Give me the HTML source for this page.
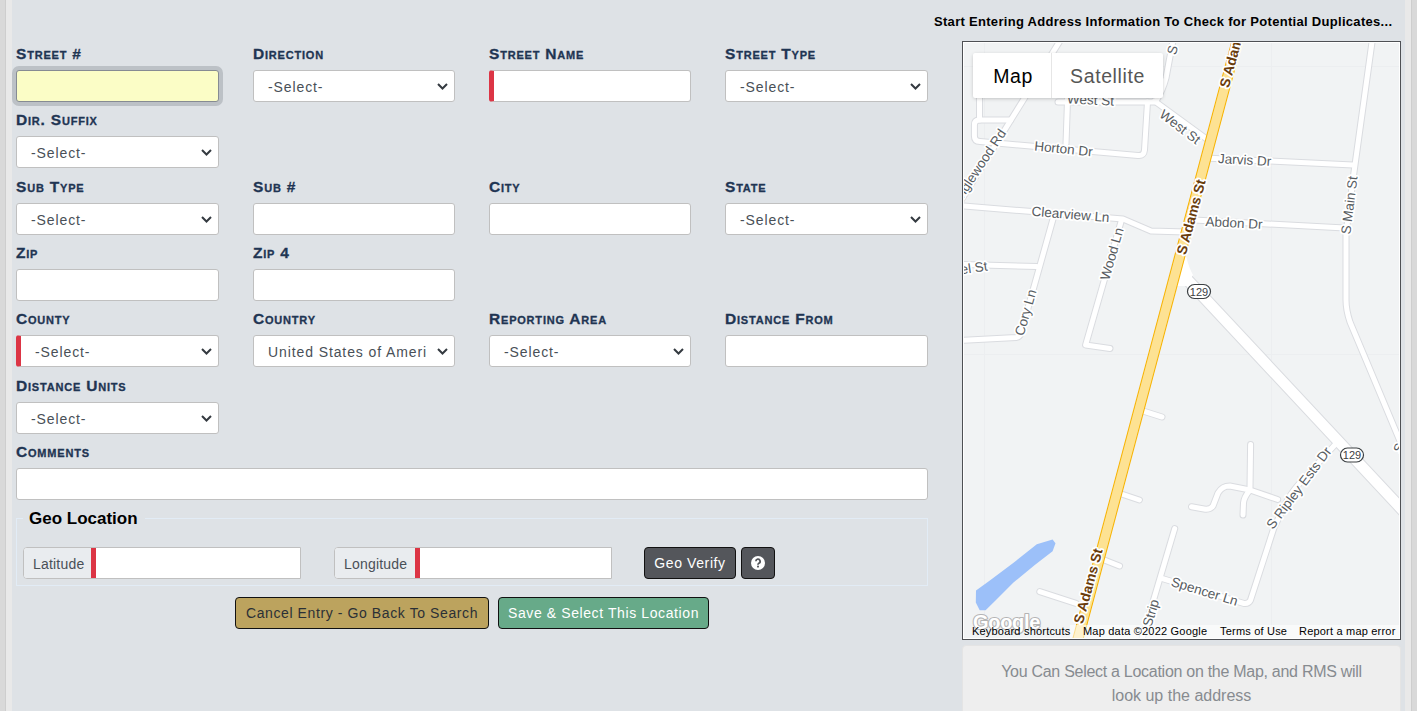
<!DOCTYPE html>
<html><head><meta charset="utf-8">
<style>
*{box-sizing:border-box;margin:0;padding:0}
html,body{width:1417px;height:711px;overflow:hidden}
body{background:#dee2e6;font-family:"Liberation Sans",sans-serif;position:relative}
.stripL{position:absolute;left:0;top:0;width:6px;height:711px;background:#d9d9d9;border-right:1px solid #cecece}
.stripL2{position:absolute;left:6px;top:0;width:6px;height:711px;background:#e9e9e9}
.stripR{position:absolute;left:1405px;top:0;width:6px;height:711px;background:#e9e9e9}
.stripR2{position:absolute;left:1411px;top:0;width:6px;height:711px;background:#d9d9d9;border-left:1px solid #cecece}
.lbl{position:absolute;font-weight:bold;font-variant:small-caps;color:#1f3553;font-size:15.5px;line-height:16px;white-space:nowrap;letter-spacing:0.8px;-webkit-text-stroke:0.3px #1f3553}
.inp{position:absolute;width:203px;height:32px;background:#fff;border:1px solid #c0c0c0;border-radius:3px}
.sel{position:absolute;width:203px;height:32px;background:#fff;border:1px solid #c0c0c0;border-radius:3px;font-size:14px;color:#495057;white-space:nowrap;overflow:hidden}
.sel span{position:absolute;left:14px;top:8px;line-height:16px;letter-spacing:0.9px}
.sel svg{position:absolute;right:6px;top:12px}
.req{border-left:5px solid #dc3545}
.btn{position:absolute;border:1px solid #111;border-radius:4px;font-size:14px;white-space:nowrap;text-align:center}
.grp{position:absolute;top:547px;height:32px;border:1px solid #c0c0c0;border-radius:4px 0 0 4px;background:#fff;overflow:hidden}
.add{position:absolute;left:0;top:0;height:30px;background:#e9ecef;border-right:5px solid #dc3545;font-size:14px;color:#495057;line-height:32px;padding-left:9px;letter-spacing:0.2px}
.btn.dk{background:#54565b;color:#fff}
.btn{letter-spacing:0.6px}
</style></head><body>
<div class="stripL"></div><div class="stripL2"></div>
<div class="stripR"></div><div class="stripR2"></div>

<!-- FORM -->
<div class="lbl" style="left:16px;top:46px">Street #</div>
<div class="lbl" style="left:253px;top:46px">Direction</div>
<div class="lbl" style="left:489px;top:46px">Street Name</div>
<div class="lbl" style="left:725px;top:46px">Street Type</div>
<div class="inp" style="left:16px;top:70px;background:#fbfdc6;border-color:#868b93;box-shadow:0 0 0 4px #bcc1c6"></div>
<div class="sel" style="width:202px;left:253px;top:70px"><span>-Select-</span><svg width="11" height="7" viewBox="0 0 11 7"><path d="M1 1l4.5 4.5L10 1" fill="none" stroke="#343a40" stroke-width="2"/></svg></div>
<div class="inp req" style="width:202px;left:489px;top:70px;"></div>
<div class="sel" style="left:725px;top:70px"><span>-Select-</span><svg width="11" height="7" viewBox="0 0 11 7"><path d="M1 1l4.5 4.5L10 1" fill="none" stroke="#343a40" stroke-width="2"/></svg></div>
<div class="lbl" style="left:16px;top:112px">Dir. Suffix</div>
<div class="sel" style="left:16px;top:136px"><span>-Select-</span><svg width="11" height="7" viewBox="0 0 11 7"><path d="M1 1l4.5 4.5L10 1" fill="none" stroke="#343a40" stroke-width="2"/></svg></div>
<div class="lbl" style="left:16px;top:179px">Sub Type</div>
<div class="lbl" style="left:253px;top:179px">Sub #</div>
<div class="lbl" style="left:489px;top:179px">City</div>
<div class="lbl" style="left:725px;top:179px">State</div>
<div class="sel" style="left:16px;top:203px"><span>-Select-</span><svg width="11" height="7" viewBox="0 0 11 7"><path d="M1 1l4.5 4.5L10 1" fill="none" stroke="#343a40" stroke-width="2"/></svg></div>
<div class="inp" style="width:202px;left:253px;top:203px;"></div>
<div class="inp" style="width:202px;left:489px;top:203px;"></div>
<div class="sel" style="left:725px;top:203px"><span>-Select-</span><svg width="11" height="7" viewBox="0 0 11 7"><path d="M1 1l4.5 4.5L10 1" fill="none" stroke="#343a40" stroke-width="2"/></svg></div>
<div class="lbl" style="left:16px;top:245px">Zip</div>
<div class="lbl" style="left:253px;top:245px">Zip 4</div>
<div class="inp" style="left:16px;top:269px;"></div>
<div class="inp" style="width:202px;left:253px;top:269px;"></div>
<div class="lbl" style="left:16px;top:311px">County</div>
<div class="lbl" style="left:253px;top:311px">Country</div>
<div class="lbl" style="left:489px;top:311px">Reporting Area</div>
<div class="lbl" style="left:725px;top:311px">Distance From</div>
<div class="sel req" style="left:16px;top:335px"><span>-Select-</span><svg width="11" height="7" viewBox="0 0 11 7"><path d="M1 1l4.5 4.5L10 1" fill="none" stroke="#343a40" stroke-width="2"/></svg></div>
<div class="sel" style="width:202px;left:253px;top:335px"><span>United States of Ameri</span><svg width="11" height="7" viewBox="0 0 11 7"><path d="M1 1l4.5 4.5L10 1" fill="none" stroke="#343a40" stroke-width="2"/></svg></div>
<div class="sel" style="width:202px;left:489px;top:335px"><span>-Select-</span><svg width="11" height="7" viewBox="0 0 11 7"><path d="M1 1l4.5 4.5L10 1" fill="none" stroke="#343a40" stroke-width="2"/></svg></div>
<div class="inp" style="left:725px;top:335px;"></div>
<div class="lbl" style="left:16px;top:378px">Distance Units</div>
<div class="sel" style="left:16px;top:402px"><span>-Select-</span><svg width="11" height="7" viewBox="0 0 11 7"><path d="M1 1l4.5 4.5L10 1" fill="none" stroke="#343a40" stroke-width="2"/></svg></div>
<div class="lbl" style="left:16px;top:444px">Comments</div>
<div class="inp" style="left:16px;top:468px;width:912px"></div>
<!-- /FORM -->
<!-- GEO -->
<div style="position:absolute;left:16px;top:518px;width:912px;height:68px;border:1px solid #e2ecf6"></div>
<div style="position:absolute;left:23px;top:510px;width:122px;height:20px;background:#dee2e6"></div>
<div style="position:absolute;left:29px;top:509px;font-size:17px;font-weight:bold;color:#000;line-height:20px;white-space:nowrap">Geo Location</div>
<div class="grp" style="left:23px;width:278px"><div class="add" style="width:72px">Latitude</div><div class="gin"></div></div>
<div class="grp" style="left:334px;width:278px"><div class="add" style="width:85px">Longitude</div><div class="gin"></div></div>
<div class="btn dk" style="left:644px;top:547px;width:92px;height:32px;line-height:30px">Geo Verify</div>
<div class="btn dk" style="left:741px;top:547px;width:34px;height:32px"><svg style="position:absolute;left:9px;top:8px" width="14" height="14" viewBox="0 0 14 14"><circle cx="7" cy="7" r="7" fill="#fff"/><path d="M4.9 5.3a2.1 2.1 0 1 1 3 1.9c-.6.3-.9.6-.9 1.3v.3" fill="none" stroke="#55575c" stroke-width="1.8"/><circle cx="7" cy="10.6" r="1.05" fill="#55575c"/></svg></div>
<div class="btn" style="left:235px;top:597px;width:254px;height:32px;line-height:30px;background:#bca35e;color:#2b3036">Cancel Entry - Go Back To Search</div>
<div class="btn" style="left:498px;top:597px;width:211px;height:32px;line-height:30px;background:#67aa89;color:#fff">Save &amp; Select This Location</div>
<!-- /GEO -->
<!-- MAP -->
<div style="position:absolute;left:934px;top:13px;font-size:13px;font-weight:bold;color:#000;white-space:nowrap;line-height:18px;letter-spacing:0.3px">Start Entering Address Information To Check for Potential Duplicates...</div>
<div style="position:absolute;left:962px;top:41px;width:439px;height:599px;border:1px solid #4e5054;background:#fff"></div>
<svg style="position:absolute;left:964px;top:43px" width="435" height="595" viewBox="964 43 435 595" font-family="Liberation Sans, sans-serif">
<rect x="964" y="43" width="435" height="595" fill="#f1f3f4"/>
<path d="M963 66.5H1400M963 354.5H1400M984.5 42V638M1271.5 42V638" stroke="#eceef0" stroke-width="1"/>
<path d="M1052.6 539.4 L1055.5 543.3 L1052.6 551.2 L1034.8 565 L1013.2 582.7 L995.5 600.5 L985.6 610.3 L979.7 610.3 L975.8 602.4 L976 590.6 L989.5 580.8 L1013.2 563 L1036.8 544.3 Z" fill="#9cc0f9"/>
<g fill="none" stroke-linecap="round" stroke-linejoin="round">
<path d="M1066.7 30 L955 210" stroke="#dadce0" stroke-width="7"/><path d="M979.5 92 L979.5 120" stroke="#dadce0" stroke-width="7"/><path d="M1010.5 120 L979 120 Q974.4 120 974.4 125 L974.4 136 Q974.4 141.4 980 141.6 L1138 155.5 Q1144 156 1144.5 150 L1147.5 102" stroke="#dadce0" stroke-width="7"/><path d="M1067.6 98 L1066 144" stroke="#dadce0" stroke-width="7"/><path d="M1058 102 L1154.5 102" stroke="#dadce0" stroke-width="7"/><path d="M1174 35 L1166 78 Q1163 90 1156 101" stroke="#dadce0" stroke-width="7"/><path d="M1154.5 101 L1208 140" stroke="#dadce0" stroke-width="7"/><path d="M1205 158 L1353 165" stroke="#dadce0" stroke-width="7"/><path d="M1373 35 L1353.6 175 L1346 233 L1346 300 Q1346 310 1350 322 L1366 360 L1410 465" stroke="#dadce0" stroke-width="7"/><path d="M950 205 L1032 211.5 L1123 219 L1151 231 L1186 232" stroke="#dadce0" stroke-width="7"/><path d="M1194 220 L1345 228" stroke="#dadce0" stroke-width="7"/><path d="M1053 219 L1021 333 Q1020 337 1016 337.5 L950 341" stroke="#dadce0" stroke-width="7"/><path d="M950 264 L1037 266.5" stroke="#dadce0" stroke-width="7"/><path d="M1121.5 220 L1085.6 345 L1110 348.5" stroke="#dadce0" stroke-width="7"/><path d="M1143 411 L1162 417" stroke="#dadce0" stroke-width="7"/><path d="M1120 493.5 L1139.4 500" stroke="#dadce0" stroke-width="7"/><path d="M1101.8 559 L1119.5 566" stroke="#dadce0" stroke-width="7"/><path d="M1039.8 591.6 L1076 603.4" stroke="#dadce0" stroke-width="7"/><path d="M1337.5 442 L1299 484 Q1290 494 1285 505 L1274 527.6 L1250.4 600.4 Q1248.5 604 1244 603.5 L1160.5 578" stroke="#dadce0" stroke-width="7"/><path d="M1250.6 444.5 L1250 488" stroke="#dadce0" stroke-width="7"/><path d="M1277.7 499.5 L1250 490 L1229.8 486 Q1222 486 1218 493 L1213 506 Q1210 510 1204 509 L1191.5 506.7" stroke="#dadce0" stroke-width="7"/><path d="M1250 490 Q1244 497 1243.5 503 L1243 515" stroke="#dadce0" stroke-width="7"/><path d="M1174.7 528.6 L1138.7 650" stroke="#dadce0" stroke-width="7"/>
<path d="M1183 275 L1410 518" stroke="#dadce0" stroke-width="12.5"/>
<path d="M1066.7 30 L955 210" stroke="#ffffff" stroke-width="5"/><path d="M979.5 92 L979.5 120" stroke="#ffffff" stroke-width="5"/><path d="M1010.5 120 L979 120 Q974.4 120 974.4 125 L974.4 136 Q974.4 141.4 980 141.6 L1138 155.5 Q1144 156 1144.5 150 L1147.5 102" stroke="#ffffff" stroke-width="5"/><path d="M1067.6 98 L1066 144" stroke="#ffffff" stroke-width="5"/><path d="M1058 102 L1154.5 102" stroke="#ffffff" stroke-width="5"/><path d="M1174 35 L1166 78 Q1163 90 1156 101" stroke="#ffffff" stroke-width="5"/><path d="M1154.5 101 L1208 140" stroke="#ffffff" stroke-width="5"/><path d="M1205 158 L1353 165" stroke="#ffffff" stroke-width="5"/><path d="M1373 35 L1353.6 175 L1346 233 L1346 300 Q1346 310 1350 322 L1366 360 L1410 465" stroke="#ffffff" stroke-width="5"/><path d="M950 205 L1032 211.5 L1123 219 L1151 231 L1186 232" stroke="#ffffff" stroke-width="5"/><path d="M1194 220 L1345 228" stroke="#ffffff" stroke-width="5"/><path d="M1053 219 L1021 333 Q1020 337 1016 337.5 L950 341" stroke="#ffffff" stroke-width="5"/><path d="M950 264 L1037 266.5" stroke="#ffffff" stroke-width="5"/><path d="M1121.5 220 L1085.6 345 L1110 348.5" stroke="#ffffff" stroke-width="5"/><path d="M1143 411 L1162 417" stroke="#ffffff" stroke-width="5"/><path d="M1120 493.5 L1139.4 500" stroke="#ffffff" stroke-width="5"/><path d="M1101.8 559 L1119.5 566" stroke="#ffffff" stroke-width="5"/><path d="M1039.8 591.6 L1076 603.4" stroke="#ffffff" stroke-width="5"/><path d="M1337.5 442 L1299 484 Q1290 494 1285 505 L1274 527.6 L1250.4 600.4 Q1248.5 604 1244 603.5 L1160.5 578" stroke="#ffffff" stroke-width="5"/><path d="M1250.6 444.5 L1250 488" stroke="#ffffff" stroke-width="5"/><path d="M1277.7 499.5 L1250 490 L1229.8 486 Q1222 486 1218 493 L1213 506 Q1210 510 1204 509 L1191.5 506.7" stroke="#ffffff" stroke-width="5"/><path d="M1250 490 Q1244 497 1243.5 503 L1243 515" stroke="#ffffff" stroke-width="5"/><path d="M1174.7 528.6 L1138.7 650" stroke="#ffffff" stroke-width="5"/>
<path d="M1183 275 L1410 518" stroke="#ffffff" stroke-width="10.5"/>
</g>
<path d="M1180 256 L1186 256 Q1189 268 1193 275 L1186 286 L1176 286 Z" fill="#fff"/>
<g fill="none" stroke-linecap="butt">
<path d="M1240 30 L1075 650" stroke="#f7b200" stroke-width="11"/>
<path d="M1240 30 L1075 650" stroke="#fde293" stroke-width="9"/>
</g>
<text x="980" y="165" transform="rotate(-56.5 980 165)" text-anchor="middle" dominant-baseline="central" font-size="13.5" font-weight="normal" fill="#575c61" stroke="#fff" stroke-width="3.5" paint-order="stroke" stroke-linejoin="round">Inglewood Rd</text><text x="1063.5" y="149" transform="rotate(5.6 1063.5 149)" text-anchor="middle" dominant-baseline="central" font-size="13.5" font-weight="normal" fill="#575c61" stroke="#fff" stroke-width="3.5" paint-order="stroke" stroke-linejoin="round">Horton Dr</text><text x="1090.5" y="100" transform="rotate(3 1090.5 100)" text-anchor="middle" dominant-baseline="central" font-size="13.5" font-weight="normal" fill="#575c61" stroke="#fff" stroke-width="3.5" paint-order="stroke" stroke-linejoin="round">West St</text><text x="1180" y="127" transform="rotate(37.6 1180 127)" text-anchor="middle" dominant-baseline="central" font-size="13.5" font-weight="normal" fill="#575c61" stroke="#fff" stroke-width="3.5" paint-order="stroke" stroke-linejoin="round">West St</text><text x="1244.6" y="160" transform="rotate(3.2 1244.6 160)" text-anchor="middle" dominant-baseline="central" font-size="13.5" font-weight="normal" fill="#575c61" stroke="#fff" stroke-width="3.5" paint-order="stroke" stroke-linejoin="round">Jarvis Dr</text><text x="1349.4" y="205.2" transform="rotate(-82.8 1349.4 205.2)" text-anchor="middle" dominant-baseline="central" font-size="13.5" font-weight="normal" fill="#575c61" stroke="#fff" stroke-width="3.5" paint-order="stroke" stroke-linejoin="round">S Main St</text><text x="1070.6" y="214.5" transform="rotate(4.7 1070.6 214.5)" text-anchor="middle" dominant-baseline="central" font-size="13.5" font-weight="normal" fill="#575c61" stroke="#fff" stroke-width="3.5" paint-order="stroke" stroke-linejoin="round">Clearview Ln</text><text x="1234" y="223" transform="rotate(3.2 1234 223)" text-anchor="middle" dominant-baseline="central" font-size="13.5" font-weight="normal" fill="#575c61" stroke="#fff" stroke-width="3.5" paint-order="stroke" stroke-linejoin="round">Abdon Dr</text><text x="1112" y="254" transform="rotate(-74 1112 254)" text-anchor="middle" dominant-baseline="central" font-size="13.5" font-weight="normal" fill="#575c61" stroke="#fff" stroke-width="3.5" paint-order="stroke" stroke-linejoin="round">Wood Ln</text><text x="974" y="268" transform="rotate(-8 974 268)" text-anchor="middle" dominant-baseline="central" font-size="13.5" font-weight="normal" fill="#575c61" stroke="#fff" stroke-width="3.5" paint-order="stroke" stroke-linejoin="round">el St</text><text x="1025.8" y="312.6" transform="rotate(-74 1025.8 312.6)" text-anchor="middle" dominant-baseline="central" font-size="13.5" font-weight="normal" fill="#575c61" stroke="#fff" stroke-width="3.5" paint-order="stroke" stroke-linejoin="round">Cory Ln</text><text x="1299" y="488" transform="rotate(-53 1299 488)" text-anchor="middle" dominant-baseline="central" font-size="13.5" font-weight="normal" fill="#575c61" stroke="#fff" stroke-width="3.5" paint-order="stroke" stroke-linejoin="round">S Ripley Ests Dr</text><text x="1204.6" y="591.5" transform="rotate(17 1204.6 591.5)" text-anchor="middle" dominant-baseline="central" font-size="13.5" font-weight="normal" fill="#575c61" stroke="#fff" stroke-width="3.5" paint-order="stroke" stroke-linejoin="round">Spencer Ln</text><text x="1151" y="613" transform="rotate(-73.5 1151 613)" text-anchor="middle" dominant-baseline="central" font-size="13.5" font-weight="normal" fill="#575c61" stroke="#fff" stroke-width="3.5" paint-order="stroke" stroke-linejoin="round">Strip</text><text x="1172.5" y="50" transform="rotate(-75 1172.5 50)" text-anchor="middle" dominant-baseline="central" font-size="13.5" font-weight="normal" fill="#575c61" stroke="#fff" stroke-width="3.5" paint-order="stroke" stroke-linejoin="round">S</text><text x="1399" y="448" transform="rotate(-68 1399 448)" text-anchor="middle" dominant-baseline="central" font-size="13.5" font-weight="normal" fill="#575c61" stroke="#fff" stroke-width="3.5" paint-order="stroke" stroke-linejoin="round">S</text>
<text x="1234" y="50" transform="rotate(-75 1234 50)" text-anchor="middle" dominant-baseline="central" font-size="14" font-weight="bold" fill="#6a3c0c" stroke="#fff" stroke-width="3.5" paint-order="stroke" stroke-linejoin="round">S Adams St</text><text x="1191" y="217" transform="rotate(-75 1191 217)" text-anchor="middle" dominant-baseline="central" font-size="14" font-weight="bold" fill="#6a3c0c" stroke="#fff" stroke-width="3.5" paint-order="stroke" stroke-linejoin="round">S Adams St</text><text x="1088" y="586" transform="rotate(-75 1088 586)" text-anchor="middle" dominant-baseline="central" font-size="14" font-weight="bold" fill="#6a3c0c" stroke="#fff" stroke-width="3.5" paint-order="stroke" stroke-linejoin="round">S Adams St</text>
<rect x="1187.5" y="284.5" width="23" height="14" rx="7" fill="#fff" stroke="#3c4043" stroke-width="1.2"/><text x="1199" y="295.5" text-anchor="middle" font-size="11" fill="#3c4043">129</text>
<rect x="1340.5" y="448" width="23" height="14" rx="7" fill="#fff" stroke="#3c4043" stroke-width="1.2"/><text x="1352" y="459" text-anchor="middle" font-size="11" fill="#3c4043">129</text>
</svg>
<div style="position:absolute;left:973px;top:53px;width:190px;height:45px;background:#fff;border-radius:2px;box-shadow:0 1px 4px -1px rgba(0,0,0,.3)"></div>
<div style="position:absolute;left:1051px;top:53px;width:1px;height:45px;background:#e6e6e6"></div>
<div style="position:absolute;left:973px;top:53px;width:78px;height:45px;line-height:45px;text-align:center;font-size:19.5px;letter-spacing:0.6px;padding-top:1px;padding-left:2px;color:#000">Map</div>
<div style="position:absolute;left:1052px;top:53px;width:111px;height:45px;line-height:45px;text-align:center;font-size:19.5px;letter-spacing:0.6px;padding-top:1px;color:#565656">Satellite</div>

<svg style="position:absolute;left:968px;top:608px" width="80" height="30"><text x="5" y="21" font-family="Liberation Sans, sans-serif" font-size="20" font-weight="bold" letter-spacing="-0.3" fill="#fff" stroke="#b4b4b4" stroke-width="2.2" paint-order="stroke" stroke-linejoin="round">Google</text></svg>
<div style="position:absolute;left:1070px;top:625px;width:329px;height:13px;background:rgba(255,255,255,.55)"></div>
<div style="position:absolute;left:972px;top:624px;font-size:11px;color:#000;line-height:14px;white-space:nowrap;letter-spacing:0.2px">Keyboard shortcuts</div>
<div style="position:absolute;left:1083px;top:624px;font-size:11px;color:#000;line-height:14px;white-space:nowrap;letter-spacing:0.2px">Map data ©2022 Google</div>
<div style="position:absolute;left:1220px;top:624px;font-size:11px;color:#000;line-height:14px;white-space:nowrap;letter-spacing:0.2px">Terms of Use</div>
<div style="position:absolute;left:1299px;top:624px;font-size:11px;color:#000;line-height:14px;white-space:nowrap;letter-spacing:0.2px">Report a map error</div>
<div style="position:absolute;left:962px;top:645px;width:439px;height:80px;background:#eeeeee;border:1px solid #e4e4e4;border-radius:4px"></div>
<div style="position:absolute;left:962px;top:660px;width:439px;text-align:center;font-size:16px;line-height:24px;color:#878b90;white-space:nowrap"><div style="letter-spacing:-0.28px">You Can Select a Location on the Map, and RMS will</div><div>look up the address</div></div>
<!-- /MAP -->
</body></html>
